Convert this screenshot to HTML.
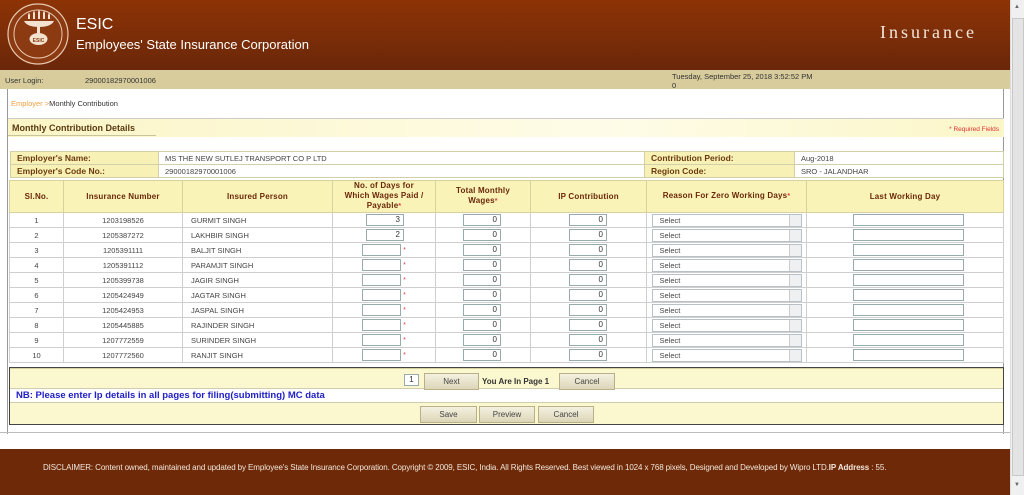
<!DOCTYPE html>
<html><head><meta charset="utf-8"><style>
*{box-sizing:border-box;margin:0;padding:0}
body{width:1024px;height:495px;overflow:hidden;background:#fff;font-family:"Liberation Sans",Arial,sans-serif;position:relative}
.abs{position:absolute}
#hdr{left:0;top:0;width:1010px;height:70px;background:linear-gradient(180deg,#8d3306 0%,#7a2d08 55%,#6a2709 100%)}
#bar{left:0;top:70px;width:1010px;height:19px;background:#d8cc9c;font-size:7.5px;color:#333}
#cont{left:7px;top:89px;width:997px;height:345px;border-left:1px solid #999;border-right:1px solid #999}
table{border-collapse:collapse;table-layout:fixed}
.info td{height:13px;border:1px solid #d3cfa8;font-size:7.5px;color:#444;padding-left:6px}
.info td.l{background:#f8f1b6;color:#6b3a10;font-weight:bold;font-size:8.5px}
.main td{border:1px solid #cfcfcf;height:15px;font-size:7.5px;color:#444;text-align:center}
.main th{background:#faf3b8;color:#6a2808;font-size:8px;font-weight:bold;border:1px solid #d8d2a0;height:32px;line-height:10px;letter-spacing:0.2px}
.main{border:1.5px solid #555}
.inp{display:inline-block;height:12px;border:1px solid #9aa;background:#fff;vertical-align:middle;text-align:right;padding-right:3px;font-size:8px;line-height:10px;color:#333}
.sel{display:inline-block;width:150px;height:13px;border:1px solid #b8c0c8;background:#fff;text-align:left;padding-left:7px;font-size:7.5px;line-height:11px;position:relative;vertical-align:middle}
.sel:after{content:"";position:absolute;right:0;top:0;width:11px;height:11px;background:#eef0f2;border-left:1px solid #ccc}
.btn{position:absolute;height:17px;border:1px solid #b9b08a;background:linear-gradient(#f4f1e0,#dcd6b8);font-size:8px;color:#444;text-align:center;line-height:15px}
.r{color:#e04040;font-size:7px}
.d{text-align:left!important;padding-left:33px}
.d2{text-align:left!important;padding-left:29px}
.w{text-align:left!important;padding-left:27px}
.ip{text-align:left!important;padding-left:38px}
.lw{text-align:left!important;padding-left:46px}
.n{text-align:left!important;padding-left:8px}
</style></head><body>
<div id="hdr" class="abs">
 <svg class="abs" style="left:6px;top:1px" width="64" height="66" viewBox="0 0 64 66">
  <circle cx="32" cy="33" r="30" fill="#8c3a12" stroke="#e8c9b0" stroke-width="1.2"/>
  <circle cx="32" cy="33" r="24" fill="none" stroke="#e8c9b0" stroke-width="1"/>
  <g fill="#f3e2d0"><path d="M22 14q1-4 2 0v4h-2zM27 12q1-4 2 0v6h-2zM32 11q1-4 2 0v7h-2zM37 12q1-4 2 0v6h-2zM42 14q1-4 2 0v4h-2z"/>
  <path d="M18 20h30q-3 6-15 6q-12 0-15-6z"/><rect x="31" y="26" width="3" height="6"/>
  <ellipse cx="32.5" cy="38" rx="9" ry="6"/></g>
  <text x="32.5" y="41" font-size="5" fill="#8c3a12" text-anchor="middle" font-weight="bold">ESIC</text>
 </svg>
 <div class="abs" style="left:76px;top:16px;color:#fff;font-size:16px">ESIC</div>
 <div class="abs" style="left:76px;top:37px;color:#fff;font-size:13px">Employees' State Insurance Corporation</div>
 <div class="abs" style="left:880px;top:22px;color:#f2e6da;font-size:18px;letter-spacing:3px;font-family:'Liberation Serif',serif">Insurance</div>
</div>
<div id="bar" class="abs">
 <span class="abs" style="left:5px;top:6px">User Login:</span>
 <span class="abs" style="left:85px;top:6px">29000182970001006</span>
 <span class="abs" style="left:672px;top:2px;line-height:9px">Tuesday, September 25, 2018 3:52:52 PM<br>0</span>
</div>
<div id="cont" class="abs">
 <div class="abs" style="left:3px;top:10px;font-size:7.5px;color:#333"><span style="color:#f0a040">Employer &gt;</span>Monthly Contribution</div>
 <div class="abs" style="left:0;top:29px;width:996px;height:1px;background:#ccc"></div>
 <div class="abs" style="left:0;top:30px;width:996px;height:18px;background:linear-gradient(90deg,#fbf5c6,#fefce8 60%,#fbf6c8)"></div>
 <div class="abs" style="left:4px;top:34px;font-size:9px;font-weight:bold;color:#5a3a10">Monthly Contribution Details</div>
 <div class="abs" style="left:0;top:46px;width:148px;height:1px;background:#c8c49c"></div>
 <div class="abs" style="right:4px;top:37px;font-size:6.5px;color:#e03030">* Required Fields</div>
 <table class="info abs" style="left:2px;top:62px;width:994px">
  <colgroup><col style="width:148px"><col style="width:486px"><col style="width:150px"><col></colgroup>
  <tr><td class="l">Employer's Name:</td><td>MS THE NEW SUTLEJ TRANSPORT CO P LTD</td><td class="l">Contribution Period:</td><td>Aug-2018</td></tr>
  <tr><td class="l">Employer's Code No.:</td><td>29000182970001006</td><td class="l">Region Code:</td><td>SRO - JALANDHAR</td></tr>
 </table>
 <table class="main abs" style="left:1px;top:91px;width:995px">
  <colgroup><col style="width:54px"><col style="width:119px"><col style="width:150px"><col style="width:103px"><col style="width:95px"><col style="width:116px"><col style="width:160px"><col></colgroup>
  <tr><th>Sl.No.</th><th>Insurance Number</th><th>Insured Person</th><th>No. of Days for<br>Which Wages Paid /<br>Payable<span class="r">*</span></th><th>Total Monthly<br>Wages<span class="r">*</span></th><th>IP Contribution</th><th>Reason For Zero Working Days<span class="r">*</span></th><th>Last Working Day</th></tr>
  <tr><td>1</td><td>1203198526</td><td class="n">GURMIT SINGH</td><td class="d"><span class="inp" style="width:38px">3</span></td><td class="w"><span class="inp" style="width:38px">0</span></td><td class="ip"><span class="inp" style="width:38px">0</span></td><td><span class="sel">Select</span></td><td class="lw"><span class="inp" style="width:111px"></span></td></tr>
  <tr><td>2</td><td>1205387272</td><td class="n">LAKHBIR SINGH</td><td class="d"><span class="inp" style="width:38px">2</span></td><td class="w"><span class="inp" style="width:38px">0</span></td><td class="ip"><span class="inp" style="width:38px">0</span></td><td><span class="sel">Select</span></td><td class="lw"><span class="inp" style="width:111px"></span></td></tr>
  <tr><td>3</td><td>1205391111</td><td class="n">BALJIT SINGH</td><td class="d2"><span class="inp" style="width:39px"></span> <span class="r">*</span></td><td class="w"><span class="inp" style="width:38px">0</span></td><td class="ip"><span class="inp" style="width:38px">0</span></td><td><span class="sel">Select</span></td><td class="lw"><span class="inp" style="width:111px"></span></td></tr>
  <tr><td>4</td><td>1205391112</td><td class="n">PARAMJIT SINGH</td><td class="d2"><span class="inp" style="width:39px"></span> <span class="r">*</span></td><td class="w"><span class="inp" style="width:38px">0</span></td><td class="ip"><span class="inp" style="width:38px">0</span></td><td><span class="sel">Select</span></td><td class="lw"><span class="inp" style="width:111px"></span></td></tr>
  <tr><td>5</td><td>1205399738</td><td class="n">JAGIR SINGH</td><td class="d2"><span class="inp" style="width:39px"></span> <span class="r">*</span></td><td class="w"><span class="inp" style="width:38px">0</span></td><td class="ip"><span class="inp" style="width:38px">0</span></td><td><span class="sel">Select</span></td><td class="lw"><span class="inp" style="width:111px"></span></td></tr>
  <tr><td>6</td><td>1205424949</td><td class="n">JAGTAR SINGH</td><td class="d2"><span class="inp" style="width:39px"></span> <span class="r">*</span></td><td class="w"><span class="inp" style="width:38px">0</span></td><td class="ip"><span class="inp" style="width:38px">0</span></td><td><span class="sel">Select</span></td><td class="lw"><span class="inp" style="width:111px"></span></td></tr>
  <tr><td>7</td><td>1205424953</td><td class="n">JASPAL SINGH</td><td class="d2"><span class="inp" style="width:39px"></span> <span class="r">*</span></td><td class="w"><span class="inp" style="width:38px">0</span></td><td class="ip"><span class="inp" style="width:38px">0</span></td><td><span class="sel">Select</span></td><td class="lw"><span class="inp" style="width:111px"></span></td></tr>
  <tr><td>8</td><td>1205445885</td><td class="n">RAJINDER SINGH</td><td class="d2"><span class="inp" style="width:39px"></span> <span class="r">*</span></td><td class="w"><span class="inp" style="width:38px">0</span></td><td class="ip"><span class="inp" style="width:38px">0</span></td><td><span class="sel">Select</span></td><td class="lw"><span class="inp" style="width:111px"></span></td></tr>
  <tr><td>9</td><td>1207772559</td><td class="n">SURINDER SINGH</td><td class="d2"><span class="inp" style="width:39px"></span> <span class="r">*</span></td><td class="w"><span class="inp" style="width:38px">0</span></td><td class="ip"><span class="inp" style="width:38px">0</span></td><td><span class="sel">Select</span></td><td class="lw"><span class="inp" style="width:111px"></span></td></tr>
  <tr><td>10</td><td>1207772560</td><td class="n">RANJIT SINGH</td><td class="d2"><span class="inp" style="width:39px"></span> <span class="r">*</span></td><td class="w"><span class="inp" style="width:38px">0</span></td><td class="ip"><span class="inp" style="width:38px">0</span></td><td><span class="sel">Select</span></td><td class="lw"><span class="inp" style="width:111px"></span></td></tr>
 </table>
 <div class="abs" style="left:1px;top:278px;width:995px;height:58px;border:1px solid #444;background:#fbf7cf">
  <div class="abs" style="left:0;top:0;width:993px;height:1px;background:#d8d2a0"></div>
  <div class="abs" style="left:0;top:20px;width:993px;height:15px;background:#fff;border-top:1px solid #d0ccb0;border-bottom:1px solid #d0ccb0"></div>
  <div class="abs" style="left:6px;top:22px;font-size:9.5px;font-weight:bold;color:#2020c8">NB: Please enter Ip details in all pages for filing(submitting) MC data</div>
 </div>
 <span class="inp abs" style="left:396px;top:285px;width:15px;text-align:center;padding:0">1</span>
 <div class="btn" style="left:416px;top:284px;width:55px">Next</div>
 <div class="abs" style="left:474px;top:288px;font-size:8px;font-weight:bold;color:#333">You Are In Page 1</div>
 <div class="btn" style="left:551px;top:284px;width:56px">Cancel</div>
 <div class="btn" style="left:412px;top:317px;width:57px">Save</div>
 <div class="btn" style="left:471px;top:317px;width:56px">Preview</div>
 <div class="btn" style="left:530px;top:317px;width:56px">Cancel</div>
</div>
<div class="abs" style="left:0;top:432px;width:1010px;height:1px;background:#bbb"></div>
<div class="abs" style="left:0;top:449px;width:1010px;height:46px;background:#6e2a08"></div>
<div class="abs" style="left:43px;top:463px;font-size:8px;color:#f0e6dc;white-space:nowrap;letter-spacing:-0.1px">DISCLAIMER: Content owned, maintained and updated by Employee's State Insurance Corporation. Copyright © 2009, ESIC, India. All Rights Reserved. Best viewed in 1024 x 768 pixels, Designed and Developed by Wipro LTD.<b>IP Address</b> : 55.</div>
<div class="abs" style="left:1010px;top:0;width:14px;height:495px;background:#f0f0f0;border-left:1px solid #ddd">
 <div class="abs" style="left:1px;top:18px;width:12px;height:458px;background:#e4e4e4;border:1px solid #c8c8c8"></div>
 <div class="abs" style="left:3px;top:4px;font-size:6px;color:#666">▲</div>
 <div class="abs" style="left:3px;top:482px;font-size:6px;color:#666">▼</div>
</div>
</body></html>
